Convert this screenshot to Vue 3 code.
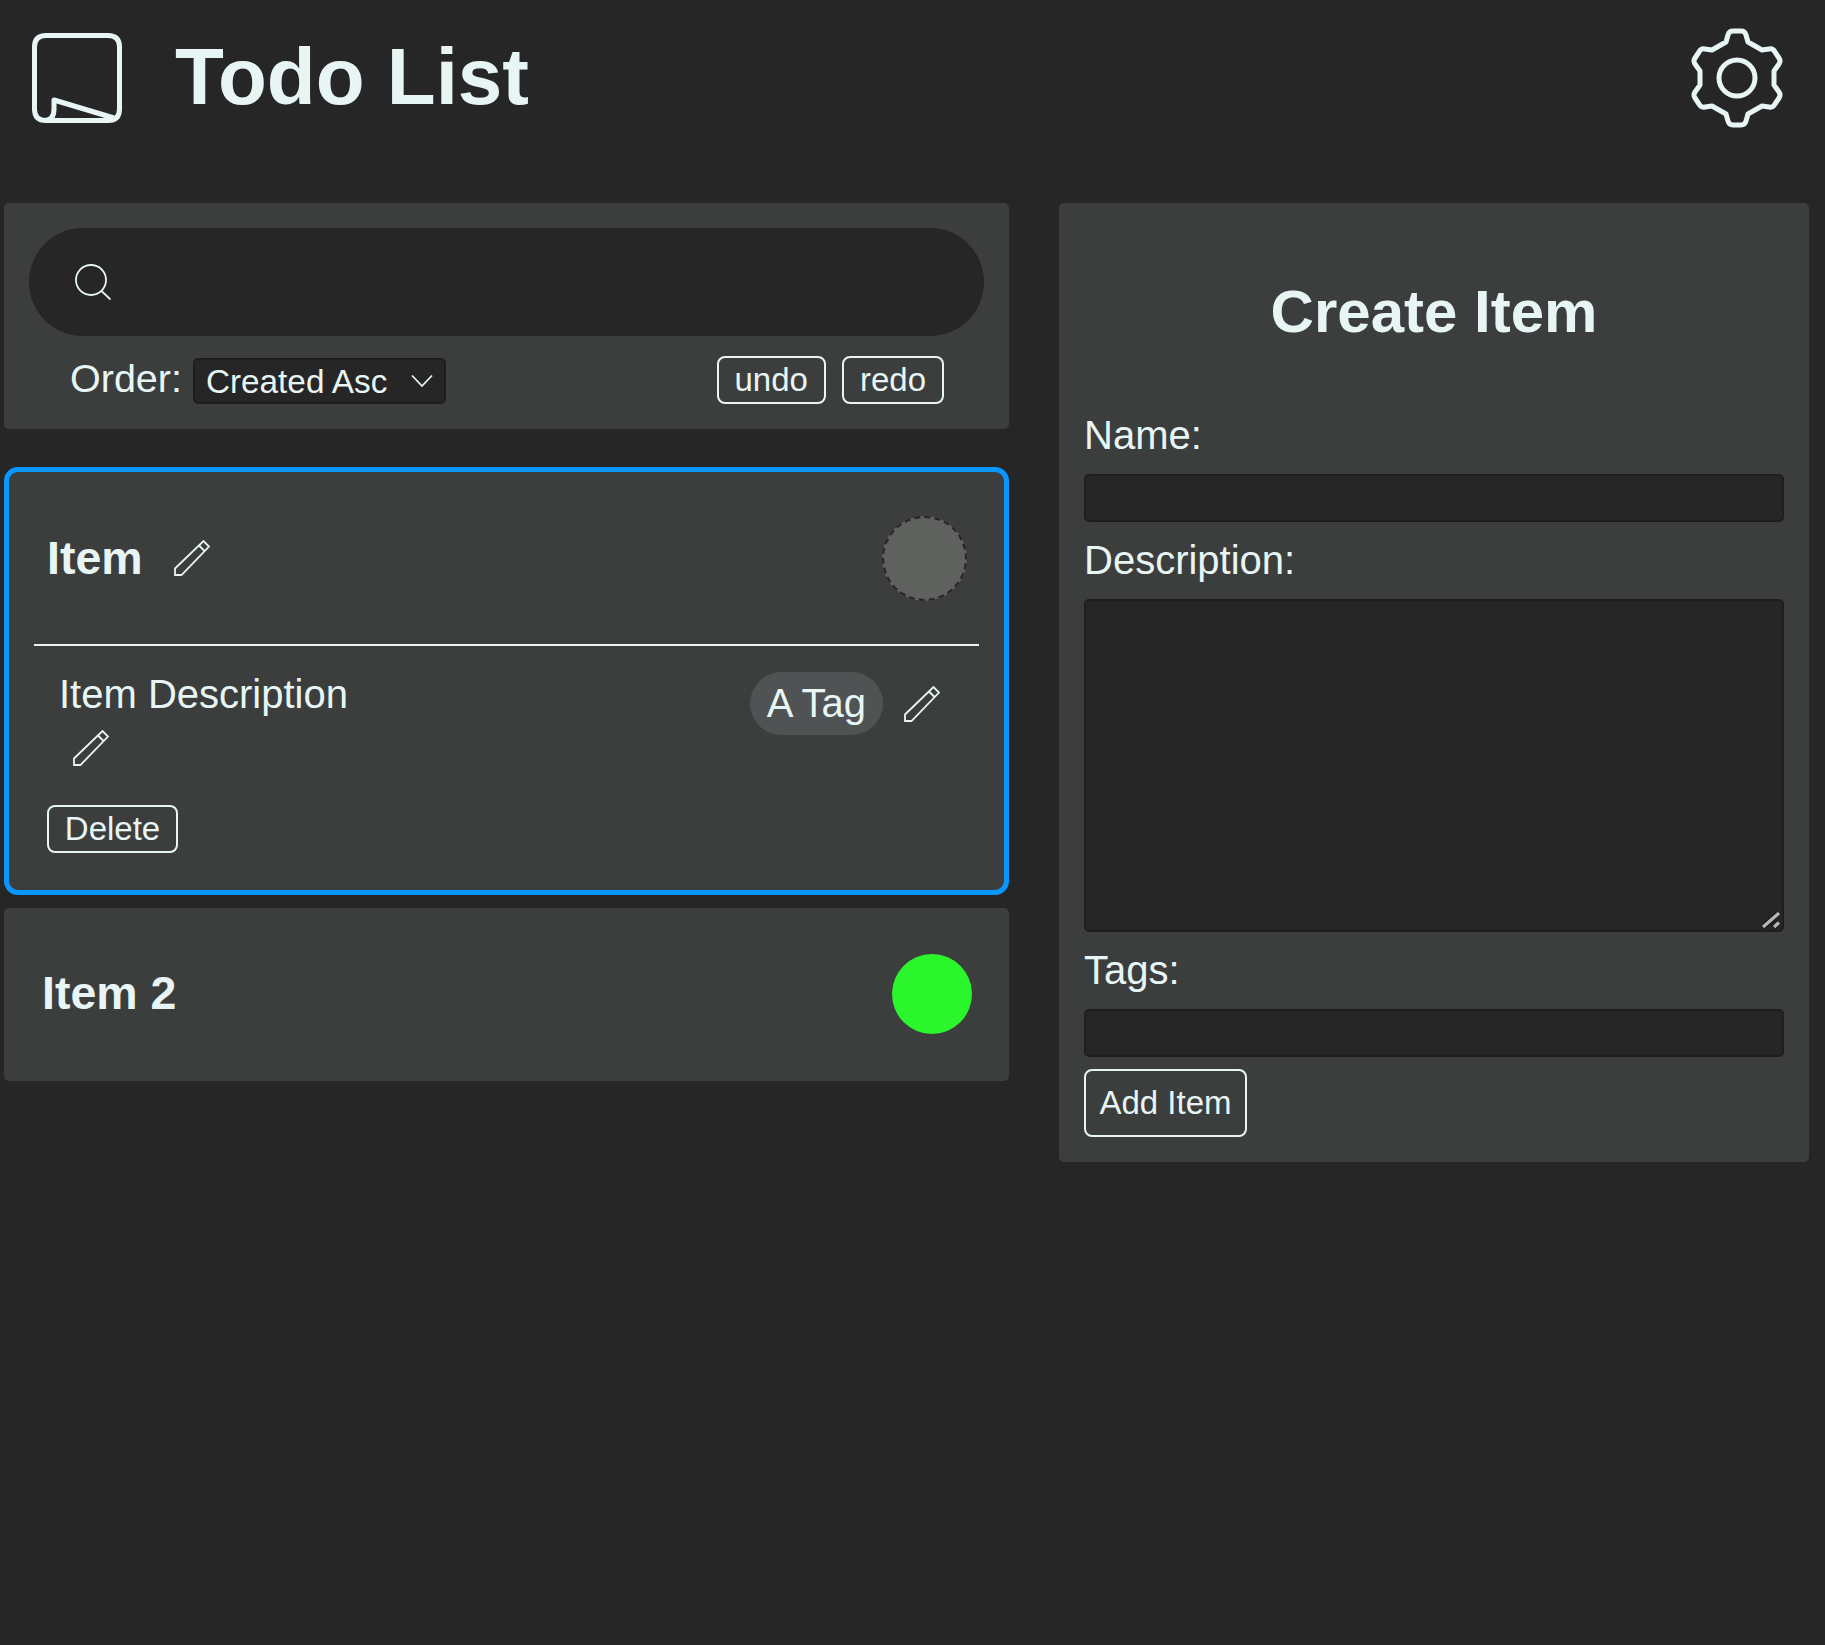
<template>
  <div class="page">
    <header class="top-bar">
      <div class="brand">
        <svg class="logo" viewBox="0 0 90 90" fill="none" stroke="#e8f5f5" stroke-width="5" stroke-linejoin="round">
          <path d="M14 2.500H76Q87.500 2.500 87.500 14V76Q87.500 87.500 76 87.500H14Q2.500 87.500 2.500 76V14Q2.500 2.500 14 2.500Z" />
          <path d="M13 87.500Q22 87 22 76V67L82 85" />
        </svg>
        <h1 class="title">Todo List</h1>
      </div>
      <svg class="gear" viewBox="-50 -52 100 104" fill="none" stroke="#e8f5f5" stroke-width="5" stroke-linejoin="round">
        <path d="M-11-36L-9-43Q-8-47-4-47H4Q8-47 9-43L11-36L25-28L32-29Q36-30 38-26L42-20Q44-17 42-14L37-7V7L42 14Q44 17 42 20L38 26Q36 30 32 29L25 28L11 36L9 43Q8 47 4 47H-4Q-8 47-9 43L-11 36L-25 28L-32 29Q-36 30-38 26L-42 20Q-44 17-42 14L-37 7V-7L-42-14Q-44-17-42-20L-38-26Q-36-30-32-29L-25-28Z" />
        <circle cx="0" cy="0" r="18" />
      </svg>
    </header>

    <main class="columns">
      <section class="list-col">
        <div class="panel search-panel">
          <div class="search-bar">
            <svg class="search-icon" viewBox="0 0 36 36" fill="none" stroke="#e8f5f5" stroke-width="1.800">
              <circle cx="16" cy="16" r="15" />
              <path d="M26.500 27L35.500 35.500" />
            </svg>
            <input class="search-input" type="text" />
          </div>
          <div class="controls">
            <label class="order-label">Order:</label>
            <div class="select-wrap">
              <select class="order-select">
                <option>Created Asc</option>
                <option>Created Desc</option>
              </select>
              <svg class="chevron" viewBox="0 0 22 14" fill="none" stroke="#e8f5f5" stroke-width="1.800">
                <path d="M1 1.500L11 12L21 1.500" />
              </svg>
            </div>
            <div class="history">
              <button class="btn">undo</button>
              <button class="btn">redo</button>
            </div>
          </div>
        </div>

        <article class="card card-open">
          <div class="card-head">
            <div class="name-wrap">
              <h3 class="item-name">Item</h3>
              <svg class="pencil" viewBox="0 0 36 36" fill="none" stroke="#e8f5f5" stroke-width="1.800">
                <path :d="pencilPath" />
              </svg>
            </div>
            <span class="status status-empty"></span>
          </div>
          <div class="divider"></div>
          <div class="card-body">
            <div class="desc-col">
              <p class="desc">Item Description</p>
              <svg class="pencil desc-pencil" viewBox="0 0 36 36" fill="none" stroke="#e8f5f5" stroke-width="1.800">
                <path :d="pencilPath" />
              </svg>
            </div>
            <div class="tag-col">
              <span class="tag">A Tag</span>
              <svg class="pencil" viewBox="0 0 36 36" fill="none" stroke="#e8f5f5" stroke-width="1.800">
                <path :d="pencilPath" />
              </svg>
            </div>
          </div>
          <button class="btn btn-delete">Delete</button>
        </article>

        <article class="card card-closed">
          <h3 class="item-name">Item 2</h3>
          <span class="status status-done"></span>
        </article>
      </section>

      <section class="panel form-panel">
        <h2 class="form-title">Create Item</h2>
        <label class="field-label">Name:</label>
        <input class="field" type="text" />
        <label class="field-label">Description:</label>
        <div class="area-wrap">
          <textarea class="field field-area"></textarea>
          <svg class="grip" viewBox="0 0 20 18">
            <path d="M2 16L18 2M13 16L18 11.500" stroke="#111" stroke-width="5.500" fill="none" />
            <path d="M2 16L18 2M13 16L18 11.500" stroke="#b4b4b4" stroke-width="3.400" fill="none" />
          </svg>
        </div>
        <label class="field-label">Tags:</label>
        <input class="field" type="text" />
        <button class="btn btn-add">Add Item</button>
      </section>
    </main>
  </div>
</template>

<script setup>
const pencilPath = "M1 35V28.500L29.500 1L35 6.500L7.500 35ZM25 5.500L31 11.500";
</script>

<style>
html,
body {
  background: #262626;
}
</style>

<style scoped>
.page {
  min-height: 1645px;
  background: #262626;
  color: #e8f5f5;
  font-family: "Liberation Sans", Arial, sans-serif;
  color-scheme: dark;
}

.top-bar {
  height: 203px;
  display: flex;
  justify-content: space-between;
  align-items: flex-start;
  padding: 0 38px 0 32px;
  box-sizing: border-box;
}

.brand {
  display: flex;
  align-items: flex-start;
  gap: 53px;
}

.logo {
  width: 90px;
  height: 90px;
  margin-top: 33px;
  flex-shrink: 0;
}

.title {
  margin: 31px 0 0;
  font-size: 80px;
  line-height: 92px;
  font-weight: 700;
}

.gear {
  width: 100px;
  height: 104px;
  margin-top: 26px;
}

.columns {
  display: flex;
  align-items: flex-start;
  gap: 50px;
  padding: 0 16px 0 4px;
}

.list-col {
  width: 1005px;
  flex-shrink: 0;
  display: flex;
  flex-direction: column;
}

.panel {
  background: #3c3e3d;
  border-radius: 5px;
}

.search-panel {
  padding: 25px 25px 25px;
  margin-bottom: 38px;
}

.search-bar {
  height: 108px;
  border-radius: 54px;
  background: #262626;
  display: flex;
  align-items: center;
  padding-left: 46px;
  gap: 16px;
}

.search-icon {
  width: 36px;
  height: 36px;
  flex-shrink: 0;
}

.search-input {
  flex: 1;
  min-width: 0;
  background: transparent;
  border: none;
  outline: none;
  color: #e8f5f5;
  font: 36px "Liberation Sans", Arial, sans-serif;
}

.controls {
  display: flex;
  align-items: center;
  height: 48px;
  margin-top: 20px;
  padding: 0 40px 0 41px;
}

.order-label {
  font-size: 39.500px;
  line-height: 44px;
  margin: 0 11px 4px 0;
}

.select-wrap {
  position: relative;
  width: 253px;
  height: 46px;
  margin-top: 2px;
}

.order-select {
  appearance: none;
  display: block;
  width: 100%;
  height: 100%;
  background: #262626;
  color: #e8f5f5;
  border: 2px solid #1e1e1e;
  border-radius: 5px;
  padding: 0 11px;
  font: 33.300px "Liberation Sans", Arial, sans-serif;
}

.chevron {
  position: absolute;
  right: 13px;
  top: 16px;
  width: 22px;
  height: 14px;
  pointer-events: none;
}

.history {
  margin-left: auto;
  display: flex;
  gap: 16px;
}

.btn {
  background: transparent;
  color: #e8f5f5;
  border: 2px solid #e8f5f5;
  border-radius: 8px;
  height: 48px;
  padding: 0 16px;
  font: 33px "Liberation Sans", Arial, sans-serif;
}

.card {
  background: #3c3e3d;
}

.card-open {
  border: 5px solid #0a96ff;
  border-radius: 14px;
  padding-bottom: 37px;
  margin-bottom: 13px;
}

.card-head {
  height: 172px;
  display: flex;
  align-items: center;
  justify-content: space-between;
  padding: 0 37px 0 38px;
}

.name-wrap {
  display: flex;
  align-items: center;
  gap: 31px;
}

.item-name {
  margin: 0;
  font-size: 46.500px;
  font-weight: 700;
}

.pencil {
  width: 36px;
  height: 36px;
  flex-shrink: 0;
}

.status {
  display: block;
  border-radius: 50%;
  box-sizing: border-box;
}

.status-empty {
  width: 85px;
  height: 85px;
  background: #5f615f;
  border: 2px dashed #262626;
}

.status-done {
  width: 80px;
  height: 80px;
  background: #2bf52b;
}

.divider {
  height: 2px;
  margin: 0 25px;
  background: #e8f5f5;
}

.card-body {
  display: flex;
  justify-content: space-between;
  align-items: flex-start;
  padding: 25px 64px 0 50px;
}

.desc {
  margin: 0;
  font-size: 40px;
  line-height: 47px;
}

.desc-pencil {
  display: block;
  margin: 12px 0 0 14px;
}

.tag-col {
  display: flex;
  align-items: center;
  gap: 21px;
  margin-top: 1px;
}

.tag {
  height: 63px;
  line-height: 63px;
  padding: 0 17px;
  border-radius: 32px;
  background: #505353;
  font-size: 40px;
}

.btn-delete {
  display: block;
  margin: 39px 0 0 38px;
  width: 131px;
  padding: 0;
}

.card-closed {
  height: 173px;
  box-sizing: border-box;
  border-radius: 5px;
  display: flex;
  align-items: center;
  justify-content: space-between;
  padding: 0 37px 2px 38px;
}

.card-closed .item-name {
  margin-bottom: 1px;
}

.form-panel {
  width: 750px;
  box-sizing: border-box;
  padding: 0 25px 25px;
  display: flex;
  flex-direction: column;
  align-items: flex-start;
}

.form-title {
  width: 100%;
  height: 120px;
  margin: 0;
  padding-top: 74px;
  text-align: center;
  font-size: 60px;
  line-height: 70px;
  font-weight: 700;
}

.field-label {
  font-size: 40px;
  line-height: 77px;
}

.field {
  width: 100%;
  height: 48px;
  box-sizing: border-box;
  background: #262626;
  border: 2px solid #1e1e1e;
  border-radius: 5px;
  color: #e8f5f5;
  outline: none;
  font: 32px "Liberation Sans", Arial, sans-serif;
}

.area-wrap {
  position: relative;
  width: 100%;
}

.field-area {
  height: 333px;
  resize: none;
  display: block;
}

.grip {
  position: absolute;
  right: 3px;
  bottom: 3px;
  width: 20px;
  height: 18px;
  pointer-events: none;
}

.btn-add {
  margin-top: 12px;
  height: 68px;
  width: 163px;
  padding: 0;
}
</style>
